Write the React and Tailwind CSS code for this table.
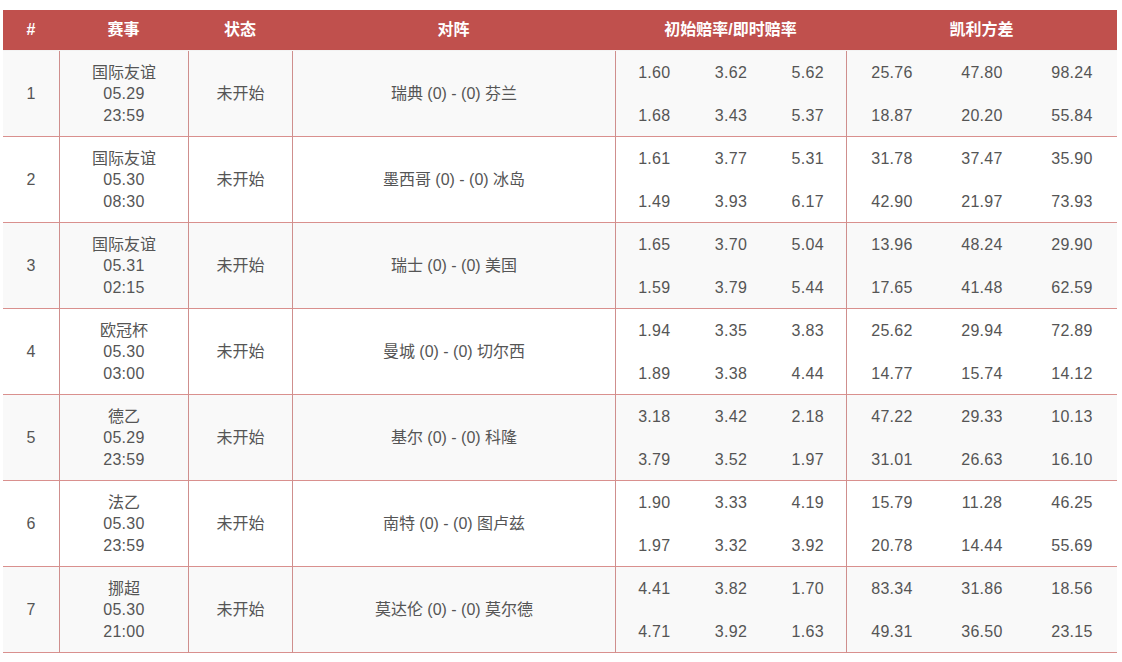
import React from "react";

const rows = [
  { n: 1, league: "国际友谊", date: "05.29", time: "23:59", match: "瑞典 (0) - (0) 芬兰", o1: ["1.60", "3.62", "5.62"], o2: ["1.68", "3.43", "5.37"], k1: ["25.76", "47.80", "98.24"], k2: ["18.87", "20.20", "55.84"] },
  { n: 2, league: "国际友谊", date: "05.30", time: "08:30", match: "墨西哥 (0) - (0) 冰岛", o1: ["1.61", "3.77", "5.31"], o2: ["1.49", "3.93", "6.17"], k1: ["31.78", "37.47", "35.90"], k2: ["42.90", "21.97", "73.93"] },
  { n: 3, league: "国际友谊", date: "05.31", time: "02:15", match: "瑞士 (0) - (0) 美国", o1: ["1.65", "3.70", "5.04"], o2: ["1.59", "3.79", "5.44"], k1: ["13.96", "48.24", "29.90"], k2: ["17.65", "41.48", "62.59"] },
  { n: 4, league: "欧冠杯", date: "05.30", time: "03:00", match: "曼城 (0) - (0) 切尔西", o1: ["1.94", "3.35", "3.83"], o2: ["1.89", "3.38", "4.44"], k1: ["25.62", "29.94", "72.89"], k2: ["14.77", "15.74", "14.12"] },
  { n: 5, league: "德乙", date: "05.29", time: "23:59", match: "基尔 (0) - (0) 科隆", o1: ["3.18", "3.42", "2.18"], o2: ["3.79", "3.52", "1.97"], k1: ["47.22", "29.33", "10.13"], k2: ["31.01", "26.63", "16.10"] },
  { n: 6, league: "法乙", date: "05.30", time: "23:59", match: "南特 (0) - (0) 图卢兹", o1: ["1.90", "3.33", "4.19"], o2: ["1.97", "3.32", "3.92"], k1: ["15.79", "11.28", "46.25"], k2: ["20.78", "14.44", "55.69"] },
  { n: 7, league: "挪超", date: "05.30", time: "21:00", match: "莫达伦 (0) - (0) 莫尔德", o1: ["4.41", "3.82", "1.70"], o2: ["4.71", "3.92", "1.63"], k1: ["83.34", "31.86", "18.56"], k2: ["49.31", "36.50", "23.15"] },
];

const cols = "grid grid-cols-[56px_129px_104px_323px_231px_271px]";

function Triple({ vals }) {
  return (
    <div className="grid grid-cols-3 h-[43px] items-center">
      {vals.map((v, i) => (
        <div key={i} className="text-center tracking-[0.3px]">{v}</div>
      ))}
    </div>
  );
}

export default function App() {
  return (
    <div
      className="w-[1122px] h-[662px] bg-white pt-[10px] pl-[3px] overflow-hidden text-[16px] text-[#555]"
      style={{ fontFamily: '"Liberation Sans", Arial, "Noto Sans CJK SC", sans-serif' }}
    >
      <div className="w-[1114px]">
        <div className={`${cols} h-[40px] bg-[#c0504d] text-white font-bold items-center`}>
          <div className="text-center">#</div>
          <div className="text-center">赛事</div>
          <div className="text-center">状态</div>
          <div className="text-center">对阵</div>
          <div className="text-center">初始赔率/即时赔率</div>
          <div className="text-center">凯利方差</div>
        </div>
        <div className="h-[1px] bg-[#f3f3f3]" />
        {rows.map((r, idx) => (
          <div
            key={r.n}
            className={`${cols} h-[86px] border-b border-[#d9908e] ${idx % 2 === 0 ? "bg-[#f9f9f9]" : "bg-white"}`}
          >
            <div className="flex items-center justify-center">{r.n}</div>
            <div className="flex flex-col items-center justify-center border-l border-[#cf8f8d] leading-[21.5px]">
              <div>{r.league}</div>
              <div className="tracking-[0.3px]">{r.date}</div>
              <div className="tracking-[0.3px]">{r.time}</div>
            </div>
            <div className="flex items-center justify-center border-l border-[#cf8f8d]">未开始</div>
            <div className="flex items-center justify-center border-l border-[#cf8f8d]">{r.match}</div>
            <div className="flex flex-col border-l border-[#cf8f8d]">
              <Triple vals={r.o1} />
              <Triple vals={r.o2} />
            </div>
            <div className="flex flex-col border-l border-[#cf8f8d]">
              <Triple vals={r.k1} />
              <Triple vals={r.k2} />
            </div>
          </div>
        ))}
      </div>
    </div>
  );
}
